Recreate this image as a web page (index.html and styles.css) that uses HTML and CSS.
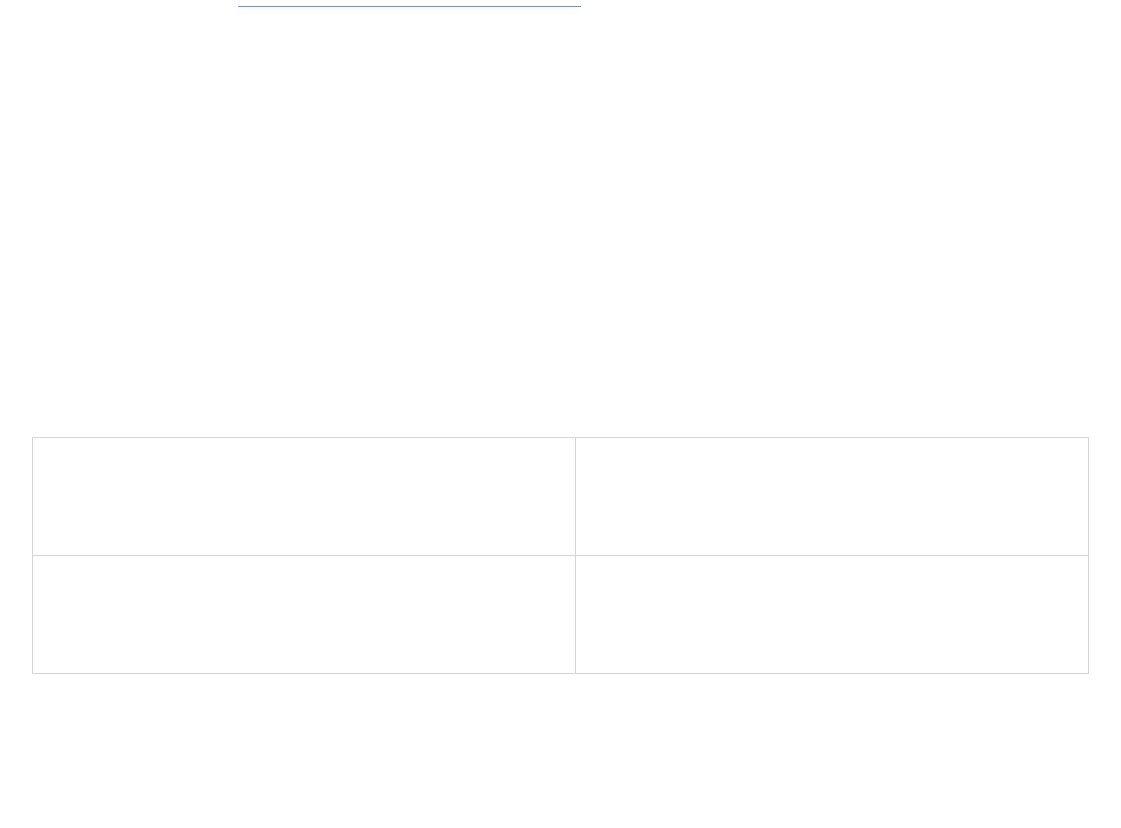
FILE: index.html
```html
<!DOCTYPE html>
<html>
  <head>
    <title>table</title>
    <link rel="stylesheet" href="styles.css">
  </head>
  <body>
    <div class="top">
      <a class="rule" href="#"></a>
    </div>
    <table class="grid">
      <tr>
        <td class="left"></td>
        <td></td>
      </tr>
      <tr>
        <td class="left"></td>
        <td></td>
      </tr>
    </table>
  </body>
</html>
```

FILE: styles.css
```css
body {
	margin: 0;
	padding: 0;
	background: #fff;
	font-family: "Liberation Sans", Arial, sans-serif;
}
.top {
	height: 7px;
	padding-left: 238px;
}
.rule {
	display: block;
	width: 343px;
	height: 6px;
	border-bottom: 1px solid #6a97c9;
}
.grid {
	margin: 430px 0 0 32px;
	width: 1057px;
	border-collapse: collapse;
}
.grid td {
	border: 1px solid #d4d4d4;
	height: 117px;
	padding: 0;
}
.grid td.left {
	width: 542px;
}
```
